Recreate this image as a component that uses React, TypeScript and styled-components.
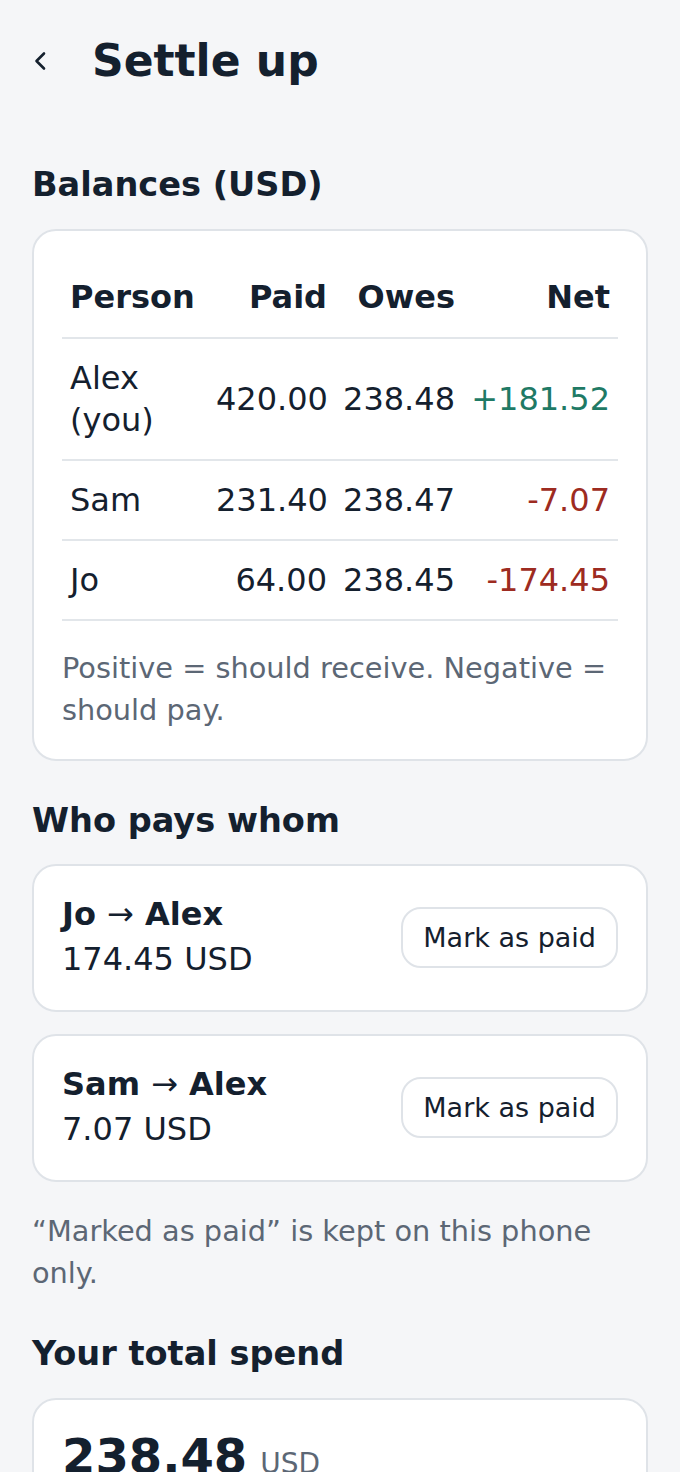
import React from 'react';
import styled, { createGlobalStyle } from 'styled-components';

const GlobalStyle = createGlobalStyle`
  html, body {
    margin: 0;
    padding: 0;
    background: #f5f6f8;
  }
  body {
    font-family: 'DejaVu Sans', 'Noto Sans', sans-serif;
    color: #14202e;
  }
  * {
    box-sizing: border-box;
  }
`;

type Balance = { name: string; paid: string; owes: string; net: string; tone: 'pos' | 'neg' };

const balances: Balance[] = [
  { name: 'Alex (you)', paid: '420.00', owes: '238.48', net: '+181.52', tone: 'pos' },
  { name: 'Sam', paid: '231.40', owes: '238.47', net: '-7.07', tone: 'neg' },
  { name: 'Jo', paid: '64.00', owes: '238.45', net: '-174.45', tone: 'neg' },
];

const transfers = [
  { from: 'Jo', to: 'Alex', amount: '174.45 USD' },
  { from: 'Sam', to: 'Alex', amount: '7.07 USD' },
];

const App: React.FC = () => {
  return (
    <Page>
      <GlobalStyle />
      <Header>
        <BackButton aria-label="Back">
          <svg width="14" height="20" viewBox="0 0 14 20" fill="none">
            <polyline
              points="11,2.5 3.5,10 11,17.5"
              stroke="#14202e"
              strokeWidth="2.6"
              strokeLinecap="round"
              strokeLinejoin="round"
            />
          </svg>
        </BackButton>
        <Title>Settle up</Title>
      </Header>

      <Section>
        <Heading>Balances (USD)</Heading>
        <Card>
          <Table>
            <colgroup>
              <col style={{ width: 146 }} />
              <col style={{ width: 127 }} />
              <col style={{ width: 128 }} />
              <col style={{ width: 155 }} />
            </colgroup>
            <thead>
              <tr>
                <Th>Person</Th>
                <Th $right>Paid</Th>
                <Th $right>Owes</Th>
                <Th $right>Net</Th>
              </tr>
            </thead>
            <tbody>
              {balances.map((b) => (
                <tr key={b.name}>
                  <Td>{b.name}</Td>
                  <Td $right>{b.paid}</Td>
                  <Td $right>{b.owes}</Td>
                  <Td $right $tone={b.tone}>
                    {b.net}
                  </Td>
                </tr>
              ))}
            </tbody>
          </Table>
          <Note $inCard>Positive = should receive. Negative = should pay.</Note>
        </Card>
      </Section>

      <Section>
        <Heading>Who pays whom</Heading>
        <TransferList>
          {transfers.map((t) => (
            <TransferCard key={t.from}>
              <TransferInfo>
                <TransferNames>
                  {t.from} <Arrow>→</Arrow> {t.to}
                </TransferNames>
                <TransferAmount>{t.amount}</TransferAmount>
              </TransferInfo>
              <PaidButton>Mark as paid</PaidButton>
            </TransferCard>
          ))}
        </TransferList>
        <Note>“Marked as paid” is kept on this phone only.</Note>
      </Section>

      <Section>
        <Heading>Your total spend</Heading>
        <Card>
          <Total>
            <TotalValue>238.48</TotalValue>
            <TotalUnit>USD</TotalUnit>
          </Total>
        </Card>
      </Section>
    </Page>
  );
};

const Page = styled.div`
  padding: 34px 32px 40px;
`;

const Header = styled.header`
  display: flex;
  align-items: center;
  gap: 12px;
  padding-bottom: 38px;
`;

const BackButton = styled.button`
  width: 48px;
  height: 48px;
  padding: 0 0 0 1px;
  border: none;
  background: transparent;
  display: flex;
  align-items: center;
  justify-content: flex-start;
  cursor: pointer;
`;

const Title = styled.h1`
  margin: 0;
  font-size: 44px;
  line-height: 53px;
  font-weight: 700;
  color: #14202e;
`;

const Section = styled.section`
  margin-top: 38px;
`;

const Heading = styled.h2`
  margin: 0 0 22px;
  font-size: 33.6px;
  line-height: 43.7px;
  font-weight: 700;
  color: #14202e;
`;

const Card = styled.div`
  background: #ffffff;
  border: 2px solid #dfe3e8;
  border-radius: 24px;
  padding: 28px;
`;

const Table = styled.table`
  width: 100%;
  border-collapse: collapse;
  table-layout: fixed;
  font-size: 32px;
  line-height: 42px;
`;

const Th = styled.th<{ $right?: boolean }>`
  padding: 17px 8px 19px;
  font-weight: 700;
  text-align: ${(p) => (p.$right ? 'right' : 'left')};
  border-bottom: 2px solid #e2e6ea;
  vertical-align: middle;
`;

const Td = styled.td<{ $right?: boolean; $tone?: 'pos' | 'neg' }>`
  padding: 18px 8px;
  font-weight: 400;
  text-align: ${(p) => (p.$right ? 'right' : 'left')};
  border-bottom: 2px solid #e2e6ea;
  vertical-align: middle;
  color: ${(p) => (p.$tone === 'pos' ? '#1f7a65' : p.$tone === 'neg' ? '#9d2b21' : '#14202e')};
`;

const Note = styled.p<{ $inCard?: boolean }>`
  margin: ${(p) => (p.$inCard ? '26px 0 0' : '28px 0 0')};
  font-size: 28.8px;
  line-height: 42px;
  color: #5c6775;
`;

const TransferList = styled.div`
  display: flex;
  flex-direction: column;
  gap: 22px;
`;

const TransferCard = styled(Card)`
  display: flex;
  align-items: center;
  justify-content: space-between;
  gap: 16px;
  padding: 26px 28px 28px;
`;

const TransferInfo = styled.div`
  display: flex;
  flex-direction: column;
`;

const TransferNames = styled.div`
  font-size: 32px;
  line-height: 45px;
  font-weight: 700;
`;

const Arrow = styled.span`
  font-weight: 400;
`;

const TransferAmount = styled.div`
  font-size: 32px;
  line-height: 45px;
`;

const PaidButton = styled.button`
  font-family: inherit;
  font-size: 27px;
  line-height: 33px;
  color: #14202e;
  background: #ffffff;
  border: 2px solid #dfe3e8;
  border-radius: 20px;
  padding: 12px 20px;
  cursor: pointer;
  white-space: nowrap;
`;

const Total = styled.div`
  display: flex;
  align-items: baseline;
  gap: 13px;
`;

const TotalValue = styled.span`
  font-size: 48px;
  line-height: 57.6px;
  font-weight: 700;
`;

const TotalUnit = styled.span`
  font-size: 28px;
  color: #5c6775;
`;

export default App;
